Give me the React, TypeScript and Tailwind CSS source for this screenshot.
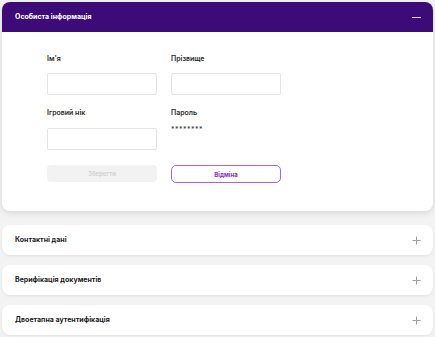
import React from "react";

function Plus() {
  return (
    <svg width="9" height="9" viewBox="0 0 9 9" className="text-[#a0a0a0]">
      <path d="M4.5 0.5v8M0.5 4.5h8" stroke="currentColor" strokeWidth="1" />
    </svg>
  );
}

function Collapsed({ title }: { title: string }) {
  return (
    <div className="h-[30px] rounded-[8px] bg-white shadow-[0_1px_3px_rgba(0,0,0,0.08)] flex items-center justify-between pl-[13px] pr-[12px]">
      <span className="text-[7px] font-bold text-[#1c1c1c]">{title}</span>
      <Plus />
    </div>
  );
}

export default function App() {
  return (
    <div
      className="w-[435px] h-[337px] bg-[#f3f3f3] px-[2px] pt-[2px] overflow-hidden"
      style={{ fontFamily: "Inter, 'Noto Sans', sans-serif" }}
    >
      <div className="rounded-[8px] bg-white shadow-[0_2px_6px_rgba(0,0,0,0.12)] overflow-hidden">
        <div className="h-[30px] bg-[#3d0b78] flex items-center justify-between pl-[13px] pr-[12px]">
          <span className="text-[7px] font-bold text-white">Особиста інформація</span>
          <span className="block w-[9px] h-[1px] bg-[#d8cfe6]" />
        </div>
        <div className="pl-[45px] pt-[22px] pb-[28px]">
          <div className="grid grid-cols-[110px_110px] gap-x-[14px]">
            <div>
              <div className="text-[7px] font-semibold text-[#2a2a2a] h-[10px] leading-[10px]">Ім'я</div>
              <div className="mt-[9px] h-[22px] border border-[#e4e4e4] rounded-[2px]" />
            </div>
            <div>
              <div className="text-[7px] font-semibold text-[#2a2a2a] h-[10px] leading-[10px]">Прізвище</div>
              <div className="mt-[9px] h-[22px] border border-[#e4e4e4] rounded-[2px]" />
            </div>
            <div className="mt-[13px]">
              <div className="text-[7px] font-semibold text-[#2a2a2a] h-[10px] leading-[10px]">Ігровий нік</div>
              <div className="mt-[10px] h-[22px] border border-[#e4e4e4] rounded-[2px]" />
            </div>
            <div className="mt-[13px]">
              <div className="text-[7px] font-semibold text-[#2a2a2a] h-[10px] leading-[10px]">Пароль</div>
              <div className="mt-[7px] text-[7px] text-[#333] leading-[10px] tracking-[0.5px]">********</div>
            </div>
            <div className="mt-[15px] h-[17px] rounded-[4px] bg-[#f2f2f2] flex items-center justify-center text-[6px] font-semibold text-[#cfcfcf]">
              Зберегти
            </div>
            <div className="mt-[15px] h-[18px] rounded-[5px] border border-[#a665dc] bg-white flex items-center justify-center text-[6px] font-bold text-[#8a2bc6]">
              Відміна
            </div>
          </div>
        </div>
      </div>
      <div className="mt-[14px] flex flex-col gap-[10px]">
        <Collapsed title="Контактні дані" />
        <Collapsed title="Верифікація документів" />
        <Collapsed title="Двоетапна аутентифікація" />
      </div>
    </div>
  );
}
